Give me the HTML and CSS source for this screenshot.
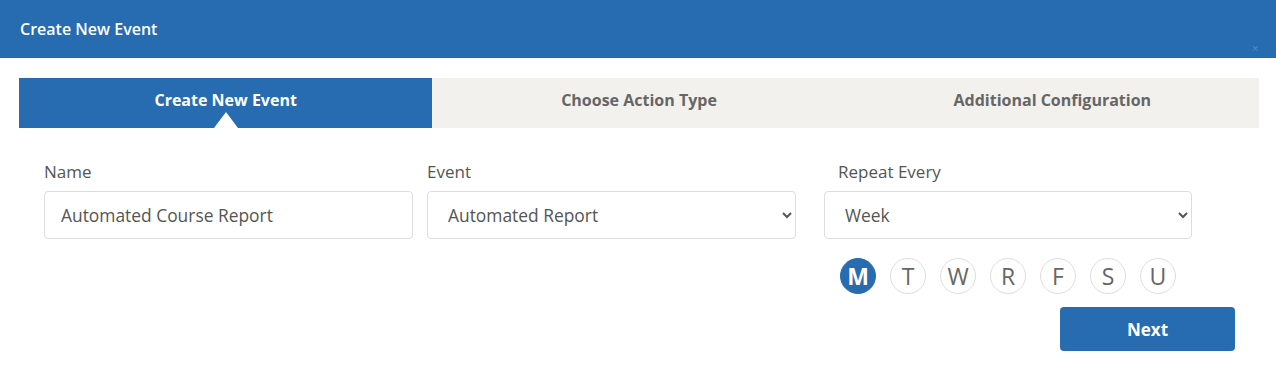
FILE: index.html
```html
<!DOCTYPE html>
<html>
<head>
    <title>Create New Event</title>
    <meta charset="utf-8">
    <link rel="stylesheet" href="styles.css">
</head>
<body>
    <div class="modal">
        <div class="modal-header">
            <h2>Create New Event</h2>
            <span class="close">&times;</span>
        </div>

        <div class="modal-body">
            <div class="steps">
                <div class="step active">Create New Event</div>
                <div class="step">Choose Action Type</div>
                <div class="step">Additional Configuration</div>
            </div>

            <div class="fields">
                <div class="field field-name">
                    <label>Name</label>
                    <input type="text" value="Automated Course Report">
                </div>
                <div class="field field-event">
                    <label>Event</label>
                    <select>
                        <option>Automated Report</option>
                    </select>
                </div>
                <div class="field field-repeat">
                    <label>Repeat Every</label>
                    <select>
                        <option>Week</option>
                    </select>
                    <div class="days">
                        <div class="day selected">M</div>
                        <div class="day">T</div>
                        <div class="day">W</div>
                        <div class="day">R</div>
                        <div class="day">F</div>
                        <div class="day">S</div>
                        <div class="day">U</div>
                    </div>
                </div>
            </div>

            <div class="actions">
                <button class="btn-next">Next</button>
            </div>
        </div>
    </div>
</body>
</html>
```

FILE: styles.css
```css
body { margin: 0; background: #fff; font-family: "Open Sans", "Liberation Sans", sans-serif; color: #555; }

.modal { width: 1276px; height: 391px; }
.modal-header { background: #276bb1; height: 58px; padding: 0 20px; display: flex; align-items: center; position: relative; }
.modal-header h2 { margin: 0; font-size: 16px; font-weight: 600; color: #fff; }
.close { position: absolute; right: 17px; bottom: 3px; font-size: 13px; line-height: 13px; color: #5b88bb; }

.modal-body { padding: 20px 17px 0 19px; }

.steps { display: flex; background: #f2f1ee; height: 50px; }
.step { flex: 1; display: flex; align-items: center; justify-content: center; font-size: 16px; font-weight: 700; color: #666; position: relative; padding-bottom: 6px; box-sizing: border-box; }
.step.active { background: #276bb1; color: #fff; }
.step.active::after { content: ""; position: absolute; bottom: 0; left: 50%; margin-left: -12px; border-left: 12px solid transparent; border-right: 12px solid transparent; border-bottom: 16px solid #fff; }

.fields { display: flex; padding: 32px 0 0 25px; }
.field { display: flex; flex-direction: column; }
.field label { font-size: 17px; line-height: 24px; margin-bottom: 7px; }
.field-name { width: 369px; margin-right: 14px; }
.field-event { width: 369px; margin-right: 28px; }
.field-repeat { width: 368px; }
.field-repeat label { padding-left: 14px; }

.field input, .field select { box-sizing: border-box; height: 48px; width: 100%; border: 1px solid #ddd; border-radius: 4px; background: #fff; font-family: inherit; font-size: 17.4px; color: #555; padding: 0 16px; margin: 0; }
.field select { padding-left: 16px; }

.days { display: flex; gap: 14px; padding: 19px 0 0 16px; }
.day { width: 36px; height: 36px; box-sizing: border-box; border: 1px solid #ddd; border-radius: 50%; display: flex; align-items: center; justify-content: center; font-size: 23px; color: #666; }
.day.selected { background: #276bb1; border-color: #276bb1; color: #fff; font-weight: 700; }

.actions { display: flex; justify-content: flex-end; padding: 13px 24px 0 0; }
.btn-next { width: 175px; height: 44px; border: 0; border-radius: 4px; background: #276bb1; color: #fff; font-family: inherit; font-size: 17px; font-weight: 700; }
```
